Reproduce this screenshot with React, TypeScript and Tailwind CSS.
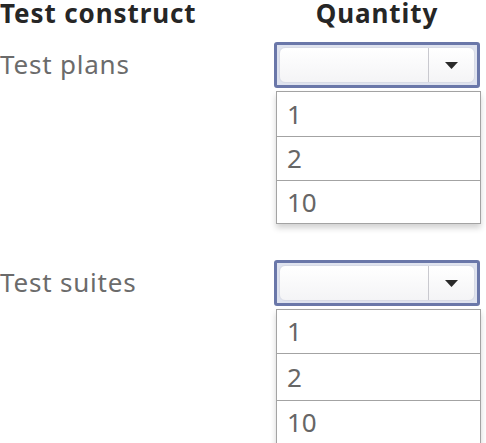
import React from "react"

const options = ["1", "2", "10"]

export default function App() {
  return (
    <div className="w-[486px] h-[443px] overflow-hidden bg-white font-['Noto_Sans',sans-serif]">
      <div className="flex items-start h-[42px] pt-[1px]">
        <div className="w-[274px] text-[26px] leading-[24px] font-bold text-[#262626] tracking-[0.9px]">
          Test construct
        </div>
        <div className="w-[206px] text-center text-[26px] leading-[24px] font-bold text-[#262626] tracking-[0.9px]">
          Quantity
        </div>
      </div>

      <Row label="Test plans" rowHeights={["h-[44px]", "h-[44px]", "h-[43px]"]} />

      <div className="h-[36px]" />

      <Row label="Test suites" rowHeights={["h-[43px]", "h-[47px]", "h-[44px]"]} />
    </div>
  )
}

interface RowProps {
  label: string
  rowHeights: string[]
}

function Row({ label, rowHeights }: RowProps) {
  return (
    <div className="flex items-start">
      <div className="w-[274px] pt-[7px] text-[26px] leading-[30px] text-[#6b6b6b] tracking-[0.8px]">
        {label}
      </div>
      <div className="w-[206px]">
        <div className="h-[46px] border-[3px] border-[#6a77a9] rounded-[3px] p-[2px] bg-[#dfe3ef]">
          <div className="flex h-full rounded-[6px] bg-gradient-to-b from-white to-[#f4f4f6] border border-[#d8dbe6]">
            <div className="flex-1" />
            <div className="w-[46px] border-l border-[#c9c9cf] flex items-center justify-center">
              <svg width="13" height="7" viewBox="0 0 13 7">
                <path d="M0 0 L13 0 L6.5 7 Z" fill="#2a2a2a" />
              </svg>
            </div>
          </div>
        </div>
        <div className="mt-[3px] ml-[2px] w-[205px] border border-[#a3a3a3] bg-white shadow-[0_4px_6px_rgba(0,0,0,0.18)]">
          {options.map((o, i) => (
            <div
              key={o}
              className={`${rowHeights[i]} flex items-center pl-[10px] text-[26px] text-[#666] ${i > 0 ? "border-t border-[#a3a3a3]" : ""}`}
            >
              {o}
            </div>
          ))}
        </div>
      </div>
    </div>
  )
}
